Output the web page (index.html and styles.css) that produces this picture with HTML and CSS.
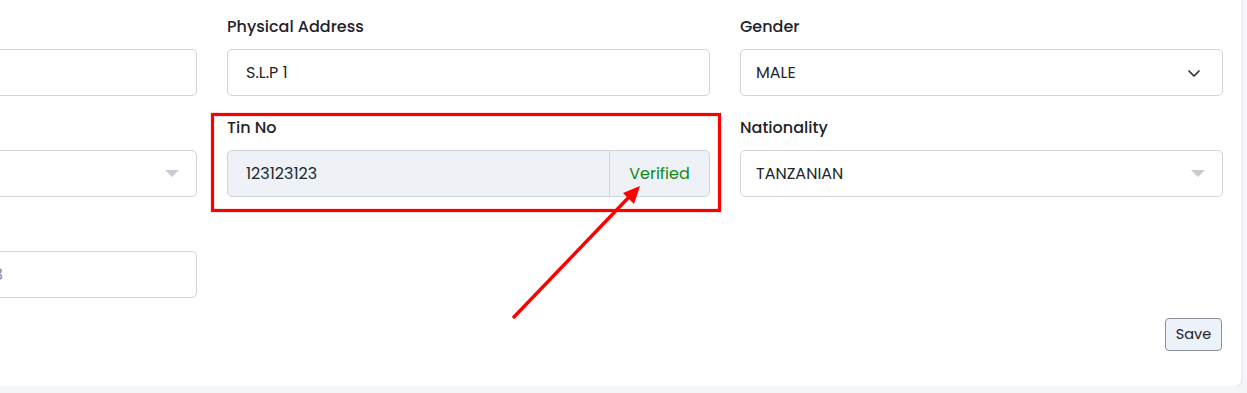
FILE: index.html
```html
<!DOCTYPE html>
<html lang="en">
<head>
  <meta charset="UTF-8">
  <meta name="viewport" content="width=device-width, initial-scale=1.0">
  <title>Customer Details</title>
  <link rel="stylesheet" href="styles.css">
</head>
<body>
  <div class="card">
    <form class="grid">
      <div class="field">
        <label>Name</label>
        <div class="control"></div>
      </div>
      <div class="field">
        <label>Physical Address</label>
        <div class="control">S.L.P 1</div>
      </div>
      <div class="field">
        <label>Gender</label>
        <div class="control select">
          <span>MALE</span>
          <svg class="chevron" width="14" height="14" viewBox="0 0 14 14"><path d="M2 5 L7 10 L12 5" fill="none" stroke="#2b2f36" stroke-width="1.7" stroke-linecap="round" stroke-linejoin="round"/></svg>
        </div>
      </div>

      <div class="field">
        <label>Region</label>
        <div class="control select">
          <span></span>
          <span class="caret"></span>
        </div>
      </div>
      <div class="field">
        <label>Tin No</label>
        <div class="control group">
          <span class="group-value">123123123</span>
          <span class="addon">Verified</span>
        </div>
      </div>
      <div class="field">
        <label>Nationality</label>
        <div class="control select">
          <span>TANZANIAN</span>
          <span class="caret"></span>
        </div>
      </div>

      <div class="field">
        <label>Reg</label>
        <div class="control placeholder">Enter registration number e.g. 123</div>
      </div>
    </form>
    <div class="actions">
      <button type="button">Save</button>
    </div>
  </div>

  <svg class="annotation" width="1247" height="393" viewBox="0 0 1247 393">
    <rect x="212.5" y="114.5" width="507" height="96" fill="none" stroke="#ff0000" stroke-width="3.2"/>
    <line x1="514" y1="317" x2="630" y2="196" stroke="#ff0000" stroke-width="3.4" stroke-linecap="round"/>
    <polygon points="640,186 634,204 623,193" fill="#ff0000"/>
  </svg>
</body>
</html>
```

FILE: styles.css
```css
body {
  margin: 0;
  background: #f4f5f8;
  font-family: "Poppins", "Inter", "Open Sans", sans-serif;
  color: #212529;
  overflow: hidden;
}
.card {
  background: #fff;
  margin-left: -306px;
  width: 1547px;
  box-sizing: border-box;
  padding: 16px 19px 35px 20px;
  border-radius: 0 0 6px 0;
  box-shadow: 0 1px 3px rgba(30, 40, 70, 0.12);
}
.grid {
  display: grid;
  grid-template-columns: repeat(3, 483px);
  column-gap: 30px;
  row-gap: 21px;
}
.field label {
  display: block;
  font-size: 16px;
  font-weight: 500;
  line-height: 22px;
  margin-bottom: 11px;
  color: #1f2329;
}
.control {
  height: 47px;
  box-sizing: border-box;
  border: 1px solid #cfd5dd;
  border-radius: 5px;
  padding: 0 18px;
  display: flex;
  align-items: center;
  font-size: 16px;
  color: #212529;
}
.select { justify-content: space-between; padding: 0 23px 0 15px; }
.select .chevron { margin-right: -2px; }
.caret {
  width: 0;
  height: 0;
  border-left: 7px solid transparent;
  border-right: 7px solid transparent;
  border-top: 7px solid #c8ccd3;
  margin-right: -6px;
}
.placeholder { color: #7d8aa3; padding-left: 24px; }
.group {
  padding: 0;
  background: #eef1f6;
}
.group-value {
  flex: 1;
  padding: 0 18px;
}
.addon {
  width: 99px;
  height: 100%;
  border-left: 1px solid #cfd5dd;
  display: flex;
  align-items: center;
  justify-content: center;
  color: #138a16;
}
.actions {
  display: flex;
  justify-content: flex-end;
  margin-top: 20px;
}
.actions button {
  font-family: inherit;
  font-size: 14.5px;
  width: 57px;
  height: 33px;
  background: #edf1f9;
  border: 1px solid #8b8f98;
  border-radius: 4px;
  color: #222;
}
.annotation {
  position: absolute;
  left: 0;
  top: 0;
  pointer-events: none;
}
```
